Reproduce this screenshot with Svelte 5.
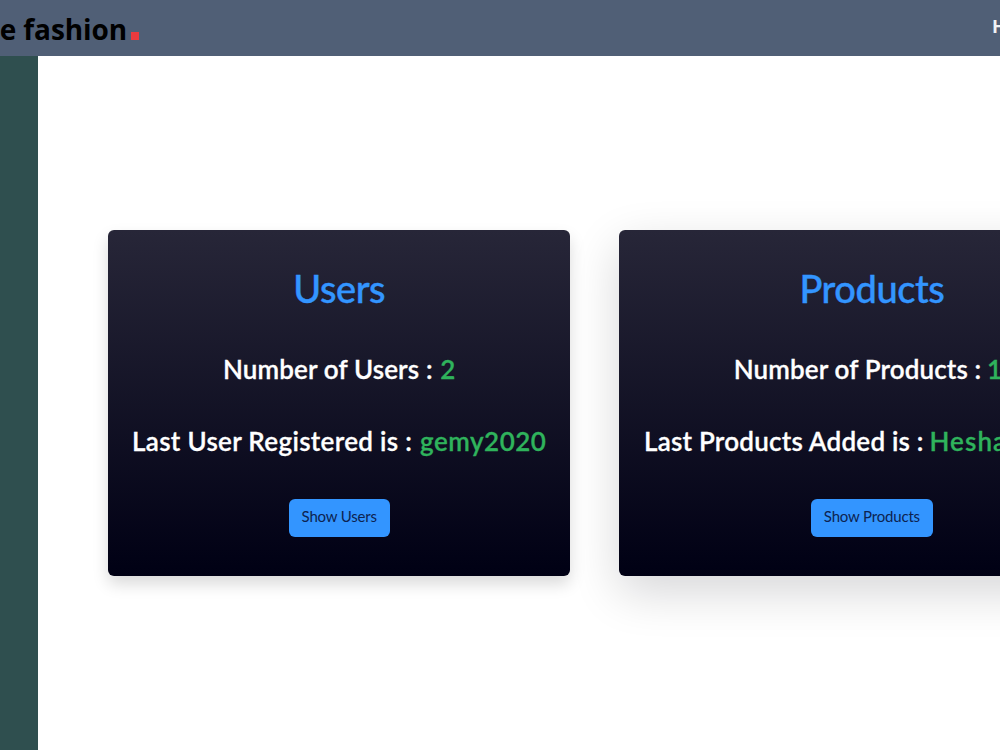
<script lang="ts">
  type Card = {
    id: string
    title: string
    countLabel: string
    count: string
    lastLabel: string
    last: string
    action: string
  }

  const cards: Card[] = [
    {
      id: 'users',
      title: 'Users',
      countLabel: 'Number of Users :',
      count: '2',
      lastLabel: 'Last User Registered is :',
      last: 'gemy2020',
      action: 'Show Users',
    },
    {
      id: 'products',
      title: 'Products',
      countLabel: 'Number of Products :',
      count: '14',
      lastLabel: 'Last Products Added is :',
      last: 'Hesham2020',
      action: 'Show Products',
    },
  ]
</script>

<div class="page">
  <header class="navbar">
    <div class="brand">the fashion<span class="dot"></span></div>
    <nav><a class="nav-link" href="#home">Home</a></nav>
  </header>
  <div class="content">
    <aside class="sidebar"></aside>
    <main class="dashboard">
      {#each cards as card (card.id)}
        <section class="card card-{card.id}">
          <h2>{card.title}</h2>
          <p class="count"><span class="label">{card.countLabel}</span> <span class="value">{card.count}</span></p>
          <p class="last"><span class="label">{card.lastLabel}</span> <span class="value">{card.last}</span></p>
          <button type="button">{card.action}</button>
        </section>
      {/each}
    </main>
  </div>
</div>

<style>
  :global(body) {
    background: #fff;
    overflow: hidden;
  }
  .page {
    width: 1000px;
    height: 750px;
    display: flex;
    flex-direction: column;
    overflow: hidden;
    font-family: Lato, "Liberation Sans", sans-serif;
  }

  .navbar {
    flex: none;
    height: 56px;
    display: flex;
    justify-content: space-between;
    background: #505f76;
  }
  .brand {
    width: 139px;
    padding-top: 9px;
    display: flex;
    justify-content: flex-end;
    align-items: baseline;
    box-sizing: border-box;
    line-height: 40px;
    font-family: "Open Sans", sans-serif;
    font-size: 28px;
    font-weight: 700;
    letter-spacing: -0.1px;
    white-space: nowrap;
    color: #000;
  }
  .dot {
    flex: none;
    width: 8px;
    height: 8px;
    margin-left: 4px;
    background: #e93a3e;
  }
  nav {
    width: 8px;
    padding-top: 13px;
  }
  .nav-link {
    font-family: "Open Sans", sans-serif;
    font-size: 18px;
    font-weight: 700;
    line-height: 26px;
    color: #f1f2f4;
    text-decoration: none;
  }

  .content {
    flex: 1;
    display: flex;
    min-height: 0;
  }
  .sidebar {
    flex: none;
    width: 38px;
    background: #2f4f4f;
  }
  .dashboard {
    display: flex;
    align-items: flex-start;
    gap: 49px;
    padding: 174px 0 0 70px;
  }

  .card {
    flex: none;
    height: 346px;
    display: flex;
    flex-direction: column;
    align-items: center;
    box-sizing: border-box;
    padding-top: 34px;
    border-radius: 6px;
    background: linear-gradient(#272638, #000014);
    white-space: nowrap;
  }
  .card-users {
    width: 462.4px;
    box-shadow: 0 8px 16px rgba(0, 0, 0, 0.15);
  }
  .card-products {
    width: 505px;
    box-shadow: 0 16px 48px rgba(0, 0, 20, 0.165);
  }
  h2 {
    margin: 0 0 41px;
    font-size: 38px;
    font-weight: 500;
    line-height: 48px;
    letter-spacing: -0.45px;
    color: #3395ff;
    -webkit-text-stroke: 0.4px currentColor;
  }
  p {
    margin: 0 0 40px;
    font-size: 26px;
    font-weight: 600;
    line-height: 32px;
    color: #fff;
    -webkit-text-stroke: 0.3px currentColor;
  }
  .count {
    letter-spacing: 0.14px;
  }
  .last {
    margin-bottom: 42px;
    letter-spacing: 0.32px;
  }
  .value {
    margin-left: 1px;
    color: #2fb35c;
  }
  .last .value {
    letter-spacing: 0.5px;
  }
  .card-products .count .value {
    margin-left: -1px;
    margin-right: -3px;
    letter-spacing: -2px;
  }
  .card-products .last {
    letter-spacing: 0.22px;
  }
  .card-products .last .value {
    margin-left: -1px;
    margin-right: 5px;
    letter-spacing: 1.1px;
  }
  button {
    height: 38px;
    padding: 0 13px 4px;
    border: 0;
    border-radius: 6px;
    background: #3395ff;
    font-family: inherit;
    font-size: 15px;
    letter-spacing: -0.18px;
    color: #0d2350;
  }
</style>
